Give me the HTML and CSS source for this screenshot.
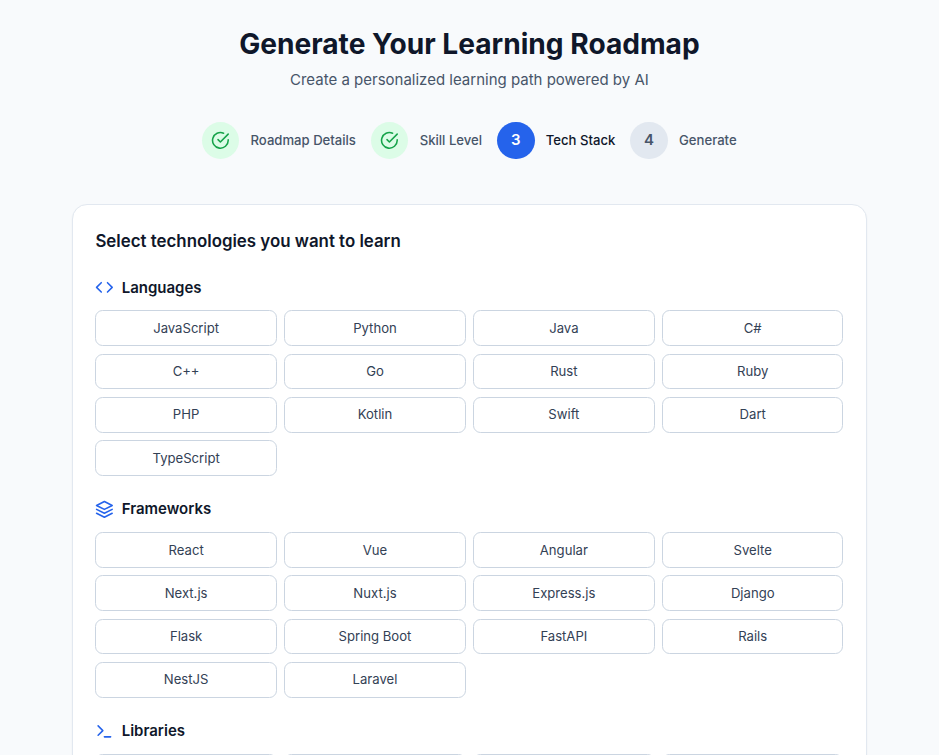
FILE: index.html
```html
<!DOCTYPE html>
<html lang="en">
<head>
<meta charset="utf-8">
<title>Generate Your Learning Roadmap</title>
<link rel="stylesheet" href="styles.css">
</head>
<body>
<main class="page">
  <header class="header">
    <h1>Generate Your Learning Roadmap</h1>
    <p>Create a personalized learning path powered by AI</p>
  </header>
  <ol class="steps">
    <li class="step done"><span class="badge"><svg class="icon" viewBox="0 0 24 24"><path d="M22 11.08V12a10 10 0 1 1-5.93-9.14"/><path d="m9 11 3 3L22 4"/></svg></span><span class="label">Roadmap Details</span></li>
    <li class="step done"><span class="badge"><svg class="icon" viewBox="0 0 24 24"><path d="M22 11.08V12a10 10 0 1 1-5.93-9.14"/><path d="m9 11 3 3L22 4"/></svg></span><span class="label">Skill Level</span></li>
    <li class="step current"><span class="badge">3</span><span class="label">Tech Stack</span></li>
    <li class="step"><span class="badge">4</span><span class="label">Generate</span></li>
  </ol>
  <section class="card">
    <h2>Select technologies you want to learn</h2>
    <div class="group">
      <h3><svg class="icon" viewBox="0 0 24 24"><path d="m16 18 6-6-6-6"/><path d="m8 6-6 6 6 6"/></svg>Languages</h3>
      <div class="options">
        <button>JavaScript</button><button>Python</button><button>Java</button><button>C#</button>
        <button>C++</button><button>Go</button><button>Rust</button><button>Ruby</button>
        <button>PHP</button><button>Kotlin</button><button>Swift</button><button>Dart</button>
        <button>TypeScript</button>
      </div>
    </div>
    <div class="group">
      <h3><svg class="icon" viewBox="0 0 24 24"><path d="M12 2 2 7l10 5 10-5Z"/><path d="m2 12 10 5 10-5"/><path d="m2 17 10 5 10-5"/></svg>Frameworks</h3>
      <div class="options">
        <button>React</button><button>Vue</button><button>Angular</button><button>Svelte</button>
        <button>Next.js</button><button>Nuxt.js</button><button>Express.js</button><button>Django</button>
        <button>Flask</button><button>Spring Boot</button><button>FastAPI</button><button>Rails</button>
        <button>NestJS</button><button>Laravel</button>
      </div>
    </div>
    <div class="group">
      <h3><svg class="icon" viewBox="0 0 24 24"><path d="m4 17 6-6-6-6"/><path d="M12 19h8"/></svg>Libraries</h3>
      <div class="options">
        <button></button><button></button><button></button><button></button>
      </div>
    </div>
  </section>
</main>
</body>
</html>
```
FILE: styles.css
```css
html { font-size: 15px; }
*, *::before, *::after { box-sizing: border-box; }
body {
  margin: 0;
  padding-right: 0.2px;
  height: 100vh;
  overflow: hidden;
  background: #f8fafc;
  color: #0f172a;
  font-family: Inter, "Liberation Sans", sans-serif;
  line-height: 1.5;
}
h1, h2, h3, p, ol { margin: 0; padding: 0; }
.page { max-width: 56rem; height: 100vh; overflow: hidden; margin: 0 auto; padding: 1.5rem; }
.header { text-align: center; }
h1 { font-size: 1.875rem; line-height: 1.5; font-weight: 700; }
.header p { margin-top: 4.4px; color: #475569; }
.steps {
  display: flex;
  justify-content: center;
  gap: 1rem;
  margin: 30.35px 0.4px 3rem 0;
  list-style: none;
}
.step { display: flex; align-items: center; gap: 0.75rem; }
.badge {
  display: flex;
  align-items: center;
  justify-content: center;
  width: 2.5rem;
  height: 2.5rem;
  border-radius: 50%;
  background: #e2e8f0;
  color: #475569;
  font-weight: 600;
}
.label { font-size: 0.875rem; line-height: 1.25rem; font-weight: 500; color: #475569; }
.done .badge { background: #dcfce7; color: #16a34a; }
.current .badge { background: #2563eb; color: #fff; }
.current .label { color: #0f172a; }
.icon {
  width: 1.25rem;
  height: 1.25rem;
  fill: none;
  stroke: currentColor;
  stroke-width: 2;
  stroke-linecap: round;
  stroke-linejoin: round;
}
.card {
  padding: 1.5rem;
  border: 1px solid #e2e8f0;
  border-radius: 1rem;
  background: #fff;
  box-shadow: 0 1px 2px rgb(0 0 0 / 0.05);
}
h2 { font-size: 1.125rem; line-height: 1.75rem; font-weight: 600; }
.group { margin-top: 1.5rem; }
h3 {
  display: flex;
  align-items: center;
  gap: 0.5rem;
  margin-bottom: 0.75rem;
  font-size: 1rem;
  line-height: 1.5rem;
  font-weight: 600;
}
h3 .icon { margin-bottom: 0.5px; color: #2563eb; }
.options { display: grid; grid-template-columns: repeat(4, 1fr); gap: 0.5rem; }
.options button {
  min-height: 35.75px;
  padding: 0.5rem 0.75rem;
  border: 1px solid #cbd5e1;
  border-radius: 0.5rem;
  background: #fff;
  color: #334155;
  font: 400 0.875rem/1.25rem Inter, "Liberation Sans", sans-serif;
}
```
